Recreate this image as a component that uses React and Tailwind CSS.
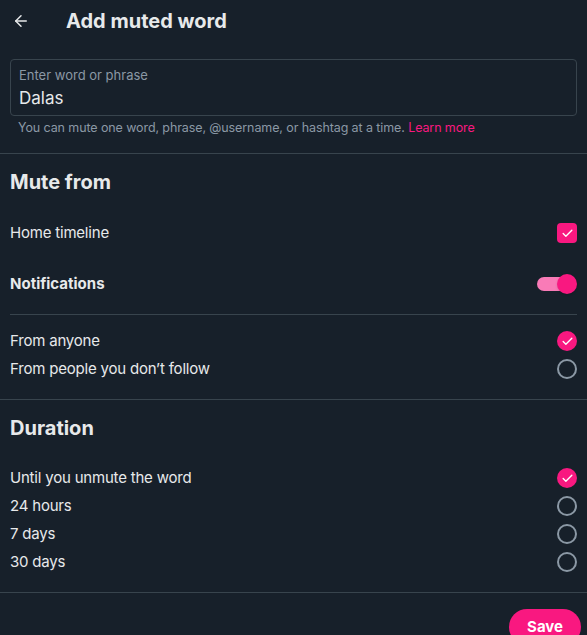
import { ArrowLeft, Check } from "lucide-react";

const font = { fontFamily: "Inter, 'Liberation Sans', sans-serif" };

const Radio = ({ checked }) =>
    checked ? (
        <span className="w-5 h-5 rounded-full bg-[#f91880] flex items-center justify-center">
            <Check size={13} strokeWidth={2.5} className="text-white" />
        </span>
    ) : (
        <span className="w-5 h-5 rounded-full border-2 border-[#8b98a5]" />
    );

const RadioRow = ({ label, checked }) => (
    <div className="flex items-center justify-between h-7 px-[10px]">
        <span className="text-[15px] tracking-[-0.2px] text-[#e7e9ea]">{label}</span>
        <Radio checked={checked} />
    </div>
);

export default function App() {
    return (
        <div className="w-[587px] h-[635px] overflow-hidden bg-[#17202a] text-[#e7e9ea]" style={font}>
            <div className="flex items-center h-[41px] pl-[12px]">
                <ArrowLeft size={18} strokeWidth={2} className="text-[#e7e9ea]" />
                <h1 className="ml-[36px] text-[20px] font-bold">Add muted word</h1>
            </div>

            <div className="px-[10px] pt-[18px]">
                <div className="h-[57px] border border-[#38444d] rounded px-2 pt-[7px]">
                    <div className="text-[13px] text-[#8b98a5] leading-4">Enter word or phrase</div>
                    <div className="text-[17px] leading-6 mt-[3px]">Dalas</div>
                </div>
                <p className="mt-[4px] pl-[8px] text-[12.5px] tracking-[-0.1px] text-[#8b98a5] leading-4">
                    You can mute one word, phrase, @username, or hashtag at a time.{" "}
                    <span className="text-[#f91880]">Learn more</span>
                </p>
            </div>

            <div className="mt-[17px] border-t border-[#38444d]" />

            <h2 className="px-[10px] pt-[16px] text-[20px] font-bold leading-6">Mute from</h2>

            <div className="flex items-center justify-between px-[10px] mt-[29px] h-5">
                <span className="text-[15px] tracking-[-0.2px]">Home timeline</span>
                <span className="w-5 h-5 rounded bg-[#f91880] flex items-center justify-center">
                    <Check size={13} strokeWidth={2.5} className="text-white" />
                </span>
            </div>

            <div className="flex items-center justify-between px-[10px] mt-[31px] h-5">
                <span className="text-[15px] font-bold">Notifications</span>
                <div className="relative w-10 h-5 flex items-center">
                    <span className="w-8 h-[14px] rounded-full bg-[#f97bb7]" />
                    <span className="absolute right-0 w-5 h-5 rounded-full bg-[#f91880] shadow" />
                </div>
            </div>

            <div className="mx-[10px] mt-[20px] border-t border-[#38444d]" />

            <div className="mt-[12px]">
                <RadioRow label="From anyone" checked />
                <RadioRow label="From people you don’t follow" />
            </div>

            <div className="mt-[16px] border-t border-[#38444d]" />

            <h2 className="px-[10px] pt-[16px] text-[20px] font-bold leading-6">Duration</h2>

            <div className="mt-[24px]">
                <RadioRow label="Until you unmute the word" checked />
                <RadioRow label="24 hours" />
                <RadioRow label="7 days" />
                <RadioRow label="30 days" />
            </div>

            <div className="mt-[16px] border-t border-[#38444d]" />

            <div className="flex justify-end pr-[6px] mt-[16px]">
                <button className="h-9 px-[18px] rounded-full bg-[#f91880] text-white font-bold text-[15px]">
                    Save
                </button>
            </div>
        </div>
    );
}
